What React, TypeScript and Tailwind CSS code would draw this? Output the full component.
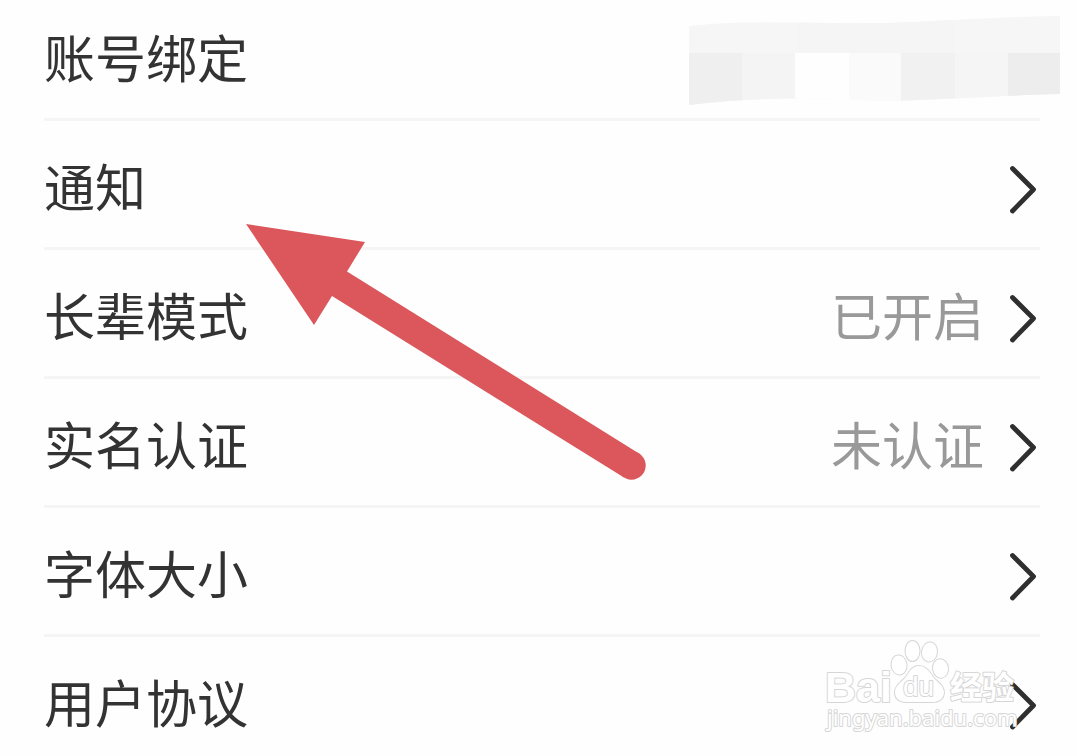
import clsx from 'clsx';

type Setting = {
  label: string;
  value?: string;
  masked?: boolean;
};

const settings: Setting[] = [
  { label: '账号绑定', masked: true },
  { label: '通知' },
  { label: '长辈模式', value: '已开启' },
  { label: '实名认证', value: '未认证' },
  { label: '字体大小' },
  { label: '用户协议' },
];

function Chevron() {
  return (
    <svg width="32" height="58" viewBox="0 -8 32 58" fill="none" stroke="#2f2f2f" strokeWidth="4.8" strokeLinecap="round" strokeLinejoin="round" aria-hidden="true">
      <path d="M4.5,4.5 L25.5,25.5 L4.5,47" />
    </svg>
  );
}

/* Pixelated strip that hides the bound account */
function Mosaic() {
  return (
    <svg width="372" height="90" viewBox="0 -1 372 90" className="-mr-5" aria-hidden="true">
      <defs>
        <clipPath id="strip">
          <path d="M1,10 C60,3 120,8 190,7 C250,6 290,1 372,0 L372,78 C300,80 250,84 190,85 C130,80 60,82 1,89 Z" />
        </clipPath>
      </defs>
      <g clipPath="url(#strip)">
        <rect width="372" height="90" fill="#f6f6f6" />
        <rect x="110" width="156" height="37" fill="#f5f5f5" />
        <rect y="37" width="54" height="53" fill="#efefef" />
        <rect x="54" y="37" width="53" height="53" fill="#f4f4f4" />
        <rect x="107" y="37" width="54" height="53" fill="#fefefe" />
        <rect x="161" y="37" width="52" height="53" fill="#fafafa" />
        <rect x="213" y="37" width="54" height="53" fill="#f1f1f1" />
        <rect x="267" y="37" width="53" height="53" fill="#f5f5f5" />
        <rect x="320" y="37" width="52" height="53" fill="#ededed" />
      </g>
    </svg>
  );
}

function Arrow() {
  return (
    <svg width="402" height="258" viewBox="0 0 402 258" className="absolute left-[246px] top-[224px] pointer-events-none" fill="#db575b" aria-hidden="true">
      <path d="M0,0 L119,18 L101,47.5 L393,229.4 L378,253.6 L86,72 L68,101 Z" />
      <circle cx="385.5" cy="241.5" r="14.2" />
    </svg>
  );
}

function Watermark() {
  return (
    <svg width="210" height="104" viewBox="0 0 210 104" className="absolute right-[46px] top-[636px] pointer-events-none" fill="#ffffff" stroke="#d6d6d6" strokeWidth="2" strokeLinejoin="round" paintOrder="stroke">
      <text x="5" y="66" fontSize="43" fontWeight="700" fontFamily="'Liberation Sans', sans-serif">Bai</text>
      <ellipse cx="79" cy="29" rx="7.5" ry="9.5" transform="rotate(-8 79 29)" />
      <ellipse cx="92.5" cy="15" rx="7" ry="10" />
      <ellipse cx="109.5" cy="16" rx="7.5" ry="9.5" transform="rotate(8 109.5 16)" />
      <ellipse cx="120.5" cy="32.5" rx="7.5" ry="9.3" transform="rotate(-8 120.5 32.5)" />
      <path d="M99,30 C106,30 110,36 113,41 C117,46 124,49 124,57 C123,64 118,66 112,66 L87,66 C80,66 75,63 75,56 C75,49 82,46 86,41 C89,36 92,30 99,30 Z" />
      <text x="83" y="60" fontSize="28" fontFamily="'Liberation Sans', sans-serif">du</text>
      <text x="130" y="63" fontSize="32" fontWeight="700" fontFamily="'Noto Sans CJK SC', sans-serif">经验</text>
      <text x="7" y="90" fontSize="22" fontFamily="'Noto Sans', sans-serif">jingyan.baidu.com</text>
    </svg>
  );
}

function SettingRow({ item, first, last }: { item: Setting; first: boolean; last: boolean }) {
  const rowClass = clsx(
    'flex w-full items-center text-left text-[51px] leading-[72px]',
    first ? 'pt-5' : 'pt-7',
    last ? 'pb-4' : 'border-b-3 border-[#f5f5f5] pb-[26px]'
  );

  if (item.masked) {
    return (
      <div className={rowClass}>
        <span className="flex-1">{item.label}</span>
        <div className="-mt-2 -mb-4">
          <Mosaic />
        </div>
      </div>
    );
  }

  return (
    <button type="button" className={rowClass}>
      <span className="flex-1">{item.label}</span>
      {item.value && <span className="mr-6 text-[#999999]">{item.value}</span>}
      <Chevron />
    </button>
  );
}

export default function App() {
  return (
    <main className="relative min-h-screen overflow-hidden bg-[#fefefe] pl-11 pr-9 text-[#333333] font-['Noto_Sans_CJK_SC',sans-serif]">
      <ul>
        {settings.map((item, i) => (
          <li key={item.label}>
            <SettingRow item={item} first={i === 0} last={i === settings.length - 1} />
          </li>
        ))}
      </ul>
      <Arrow />
      <Watermark />
    </main>
  );
}
